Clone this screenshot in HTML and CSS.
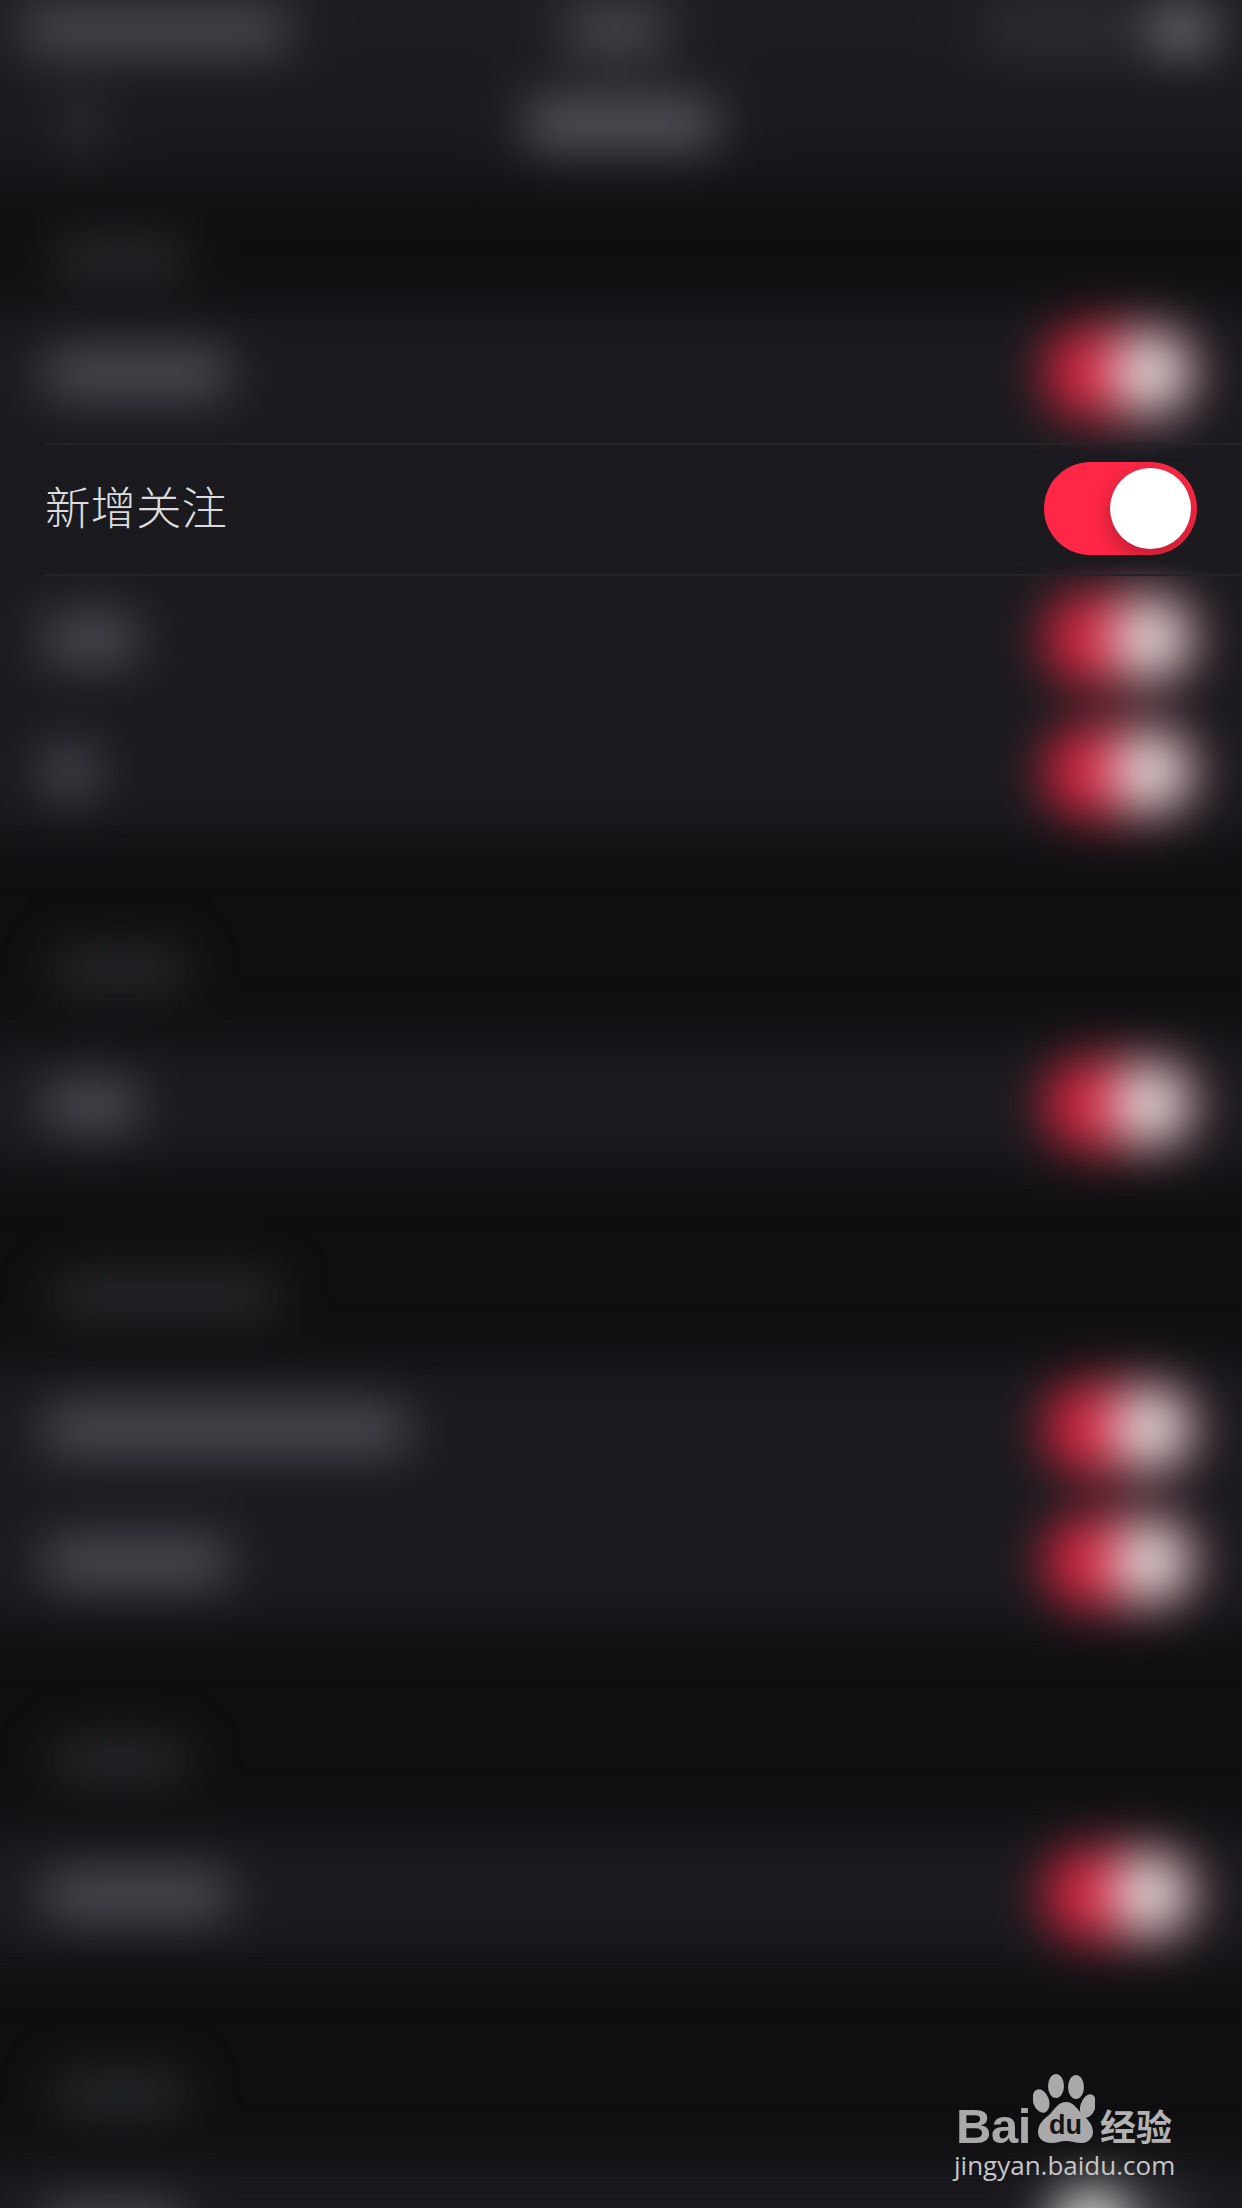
FILE: index.html
```html
<!DOCTYPE html>
<html lang="zh-CN">
<head>
<meta charset="utf-8">
<title>新增关注</title>
<link rel="stylesheet" href="styles.css">
</head>
<body>
<main class="screen">
  <div class="backdrop">
    <header class="nav">
      <div class="status">
        <i class="bar bar-carrier"></i>
        <i class="bar bar-time"></i>
        <div class="status-right"><i class="bar bar-percent"></i><i class="bar bar-battery"></i></div>
      </div>
      <div class="navbar">
        <i class="bar bar-back"></i>
        <i class="bar bar-title"></i>
        <span></span>
      </div>
    </header>

    <div class="head head-first"><i class="bar bar-head"></i></div>
    <div class="row"><i class="bar bar-label w4"></i><div class="toggle"><span class="knob"></span></div></div>
    <div class="row"></div>
    <div class="row"><i class="bar bar-label w2"></i><div class="toggle"><span class="knob"></span></div></div>
    <div class="row"><i class="bar bar-label w1"></i><div class="toggle"><span class="knob"></span></div></div>

    <div class="head"><i class="bar bar-head"></i></div>
    <div class="row"><i class="bar bar-label w2"></i><div class="toggle"><span class="knob"></span></div></div>

    <div class="head head-short"><i class="bar bar-head wide"></i></div>
    <div class="row"><i class="bar bar-label w8"></i><div class="toggle"><span class="knob"></span></div></div>
    <div class="row"><i class="bar bar-label w4"></i><div class="toggle"><span class="knob"></span></div></div>

    <div class="head"><i class="bar bar-head"></i></div>
    <div class="row"><i class="bar bar-label w4"></i><div class="toggle"><span class="knob"></span></div></div>

    <div class="head"><i class="bar bar-head"></i></div>
    <div class="row"><i class="bar bar-label w3"></i><div class="toggle toggle-off"><span class="knob"></span></div></div>
  </div>

  <section class="focus">
    <span class="focus-label">新增关注</span>
    <div class="toggle toggle-sharp"><span class="knob"></span></div>
  </section>

  <div class="watermark">
    <div class="wm-top">
      <span class="wm-bai">Bai</span>
      <svg class="wm-paw" viewBox="0 0 62 72" width="62" height="72" aria-hidden="true">
        <ellipse cx="23" cy="14" rx="8" ry="12"/>
        <ellipse cx="43" cy="15" rx="8" ry="12"/>
        <ellipse cx="8" cy="29" rx="8" ry="12" transform="rotate(-18 8 29)"/>
        <ellipse cx="55" cy="34" rx="7.5" ry="12" transform="rotate(18 55 34)"/>
        <path d="M33 30C25 30 22 37 17 42C11 47 5 52 5 60C5 67 11 71 18 71C24 71 28 69 33 69C38 69 43 71 49 71C55 71 60 66 60 60C60 52 54 47 49 42C44 37 41 30 33 30Z"/>
        <text class="wm-du" x="32.5" y="62" text-anchor="middle">du</text>
      </svg>
      <span class="wm-jy">经验</span>
    </div>
    <div class="wm-url">jingyan.baidu.com</div>
  </div>
</main>
</body>
</html>
```

FILE: styles.css
```css
* { box-sizing: border-box; }

html, body {
  margin: 0;
  padding: 0;
  background: #0f0f11;
}

.screen {
  position: relative;
  width: 1242px;
  height: 2208px;
  overflow: hidden;
  background: #0f0f11;
  font-family: "Noto Sans CJK SC", "Noto Sans", sans-serif;
}

/* The whole settings page sits out of focus behind the one sharp row. */
.backdrop {
  display: flex;
  flex-direction: column;
  margin: -80px -80px 0;
  filter: blur(25px);
}

.backdrop .toggle { opacity: .84; }

.bar { display: block; flex: none; }

.nav {
  height: 270px;
  padding-top: 80px;
  background: linear-gradient(#1f1f24 0, #1b1b20 60%, #17171b 100%);
}

.status {
  display: flex;
  justify-content: space-between;
  align-items: center;
  height: 66px;
  padding: 0 110px 6px 104px;
}

.status-right { display: flex; align-items: center; gap: 18px; }

.bar-carrier { width: 262px; height: 42px; background: #505055; }
.bar-time { width: 100px; height: 54px; background: #46464b; margin-right: 40px; }
.bar-percent { width: 146px; height: 38px; background: #333337; }
.bar-battery { width: 62px; height: 40px; background: #7c7c81; }

.navbar {
  display: grid;
  grid-template-columns: 1fr auto 1fr;
  align-items: center;
  height: 104px;
  padding: 12px 125px 0;
}

.bar-back { width: 28px; height: 52px; background: #38383c; margin-left: 22px; }
.bar-title { width: 190px; height: 48px; background: #58585e; }

.head {
  display: flex;
  align-items: flex-end;
  height: 200px;
  padding: 0 0 52px 135px;
}

.head-first { height: 116px; padding-bottom: 32px; }
.head-short { height: 191px; padding-bottom: 50px; }

.bar-head { width: 130px; height: 32px; background: #323337; }
.bar-head.wide { width: 222px; }

.row {
  display: flex;
  justify-content: space-between;
  align-items: center;
  height: 133px;
  padding: 0 125px;
  background: #1a1a1f;
}

.bar-label { height: 46px; background: #505056; }
.w1 { width: 50px; }
.w2 { width: 92px; }
.w3 { width: 135px; }
.w4 { width: 183px; }
.w8 { width: 362px; }

.toggle {
  position: relative;
  flex: none;
  width: 153px;
  height: 93px;
  margin-left: auto;
  border-radius: 47px;
  background: #ff2745;
  overflow: hidden;
}

.knob {
  position: absolute;
  top: 6px;
  right: 6px;
  width: 81px;
  height: 81px;
  border-radius: 50%;
  background: #fff;
  box-shadow: 0 8px 22px rgba(0, 0, 0, .28);
}

.toggle-off { background: #3a3a3f; }
.toggle-off .knob { right: auto; left: 6px; }

/* Sharp row lying over the blurred page */
.focus {
  position: absolute;
  top: 443px;
  left: 0;
  display: flex;
  align-items: center;
  justify-content: space-between;
  width: 1242px;
  height: 133px;
  padding: 0 45px 2px;
}

.focus::before {
  content: "";
  position: absolute;
  inset: 0;
  background: #1a1a1f;
  -webkit-mask-image: linear-gradient(transparent 0, #000 18px, #000 calc(100% - 18px), transparent 100%);
  mask-image: linear-gradient(transparent 0, #000 18px, #000 calc(100% - 18px), transparent 100%);
}

.focus::after {
  content: "";
  position: absolute;
  top: 0;
  bottom: 0;
  left: 45px;
  right: 0;
  border-top: 2px solid #232328;
  border-bottom: 2px solid #232328;
}

.focus-label {
  position: relative;
  z-index: 1;
  margin-bottom: 6px;
  font-size: 45.5px;
  line-height: 1;
  font-weight: 300;
  color: #dcdcde;
}

.toggle-sharp { z-index: 1; }

/* Baidu Jingyan watermark */
.watermark {
  position: absolute;
  right: 66px;
  bottom: 28px;
  display: flex;
  flex-direction: column;
  align-items: flex-start;
  width: 222px;
}

.wm-top {
  display: flex;
  align-items: flex-end;
  height: 72px;
  margin-left: 2px;
}

.wm-bai {
  font-family: "Liberation Sans", Arial, sans-serif;
  font-weight: 700;
  font-size: 49px;
  line-height: 36px;
  color: #a9a9a9;
  width: 77px;
  letter-spacing: -.4px;
}

.wm-paw { flex: none; fill: #a9a9a9; }

.wm-du {
  font-family: "Liberation Sans", Arial, sans-serif;
  font-weight: 700;
  font-size: 27px;
  fill: #141416;
}

.wm-jy {
  margin-left: 5px;
  font-size: 36px;
  line-height: 38px;
  font-weight: 700;
  color: #b2b2b2;
  white-space: nowrap;
}

.wm-url {
  margin-top: 6px;
  font-family: "Open Sans", sans-serif;
  font-size: 26px;
  line-height: 30px;
  color: #c6c6c6;
  white-space: nowrap;
}
```
